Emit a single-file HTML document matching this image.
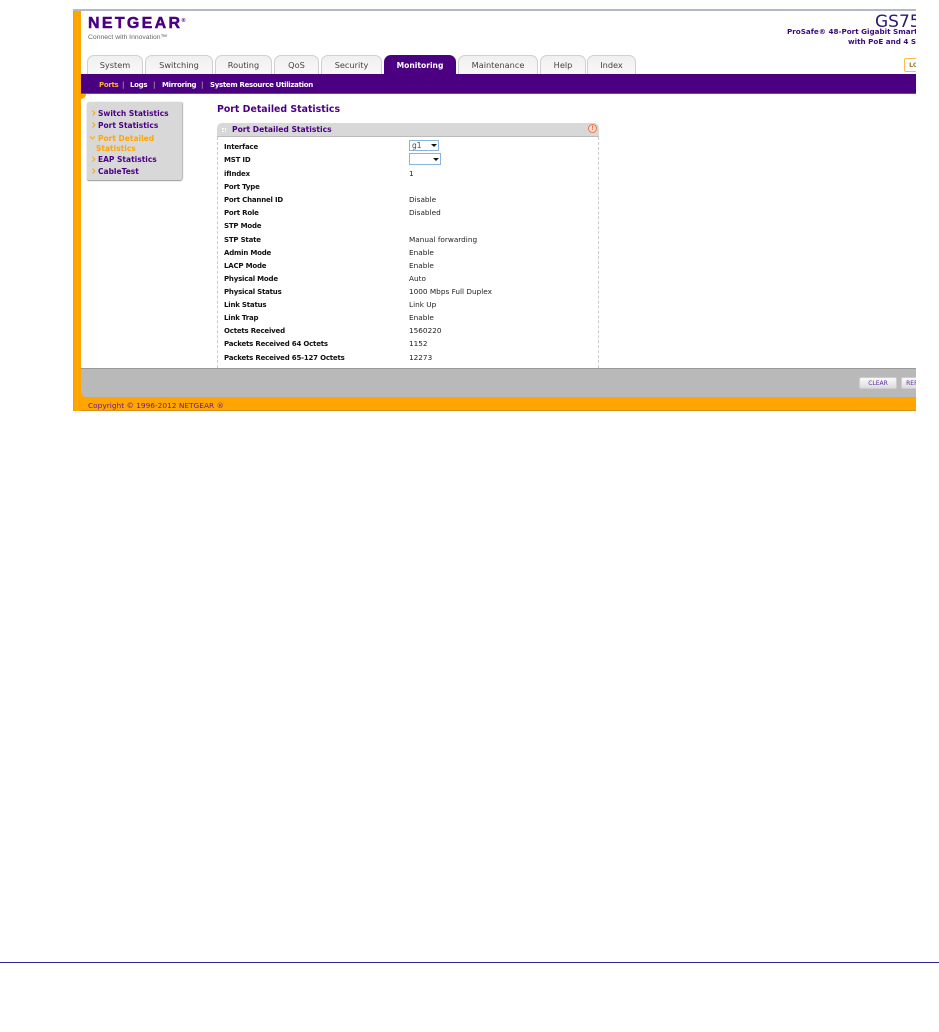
<!DOCTYPE html>
<html><head><meta charset="utf-8"><style>
html,body{margin:0;padding:0;background:#fff}
body{width:939px;height:1032px;position:relative;overflow:hidden;font-family:"DejaVu Sans","Liberation Sans",sans-serif}
#w{position:absolute;left:73px;top:9px;width:843px;height:402px;overflow:hidden;background:#fff;filter:blur(.3px)}
#w div{position:absolute;white-space:nowrap}
.tab{top:46px;height:18px;background:linear-gradient(#f0f0f0,#f8f8f8);border:1px solid #d0d0d0;border-bottom:0;border-radius:7px 7px 0 0;text-align:center;font:8.2px/19px "DejaVu Sans",sans-serif;color:#444}
.l{left:151px;font:bold 7px/10px "DejaVu Sans",sans-serif;letter-spacing:-.2px;color:#111;margin-top:1px}
.v{left:336px;font:7.3px/10px "DejaVu Sans",sans-serif;color:#222;margin-top:1px}
.sb{left:25px;font:bold 7.5px/10px "DejaVu Sans",sans-serif;color:#4b0082}
.ar{left:18px;width:2.5px;height:2.5px;border-top:1.5px solid #ffa500;border-right:1.5px solid #ffa500;transform:rotate(45deg)}
.m{top:71px;font:bold 7px/10px "DejaVu Sans",sans-serif;letter-spacing:-.3px;color:#fff}
.s{top:71px;font:7px/10px "DejaVu Sans",sans-serif;color:#ccc}
</style></head><body>
<div id="w">
<div style="left:0;top:0;width:843px;height:2px;background:#b4b8c4"></div>
<div style="left:0;top:2px;width:8px;height:400px;background:#ffa500;border-left:1px solid #c8a050;box-sizing:border-box"></div>

<div style="left:15px;top:5px;font:bold 16px/20px 'Liberation Sans',sans-serif;letter-spacing:2.3px;color:#4b0082;-webkit-text-stroke:.5px #4b0082">NETGEAR</div>
<div style="left:108px;top:9px;font:bold 5px/6px 'DejaVu Sans',sans-serif;color:#4b0082">®</div>
<div style="left:15px;top:24px;font:6.8px/9px 'Liberation Sans',sans-serif;color:#666">Connect with Innovation™</div>

<div style="left:714px;top:1px;width:200px;height:40px">
<div style="left:88px;top:2px;font:17px/20px 'DejaVu Sans',sans-serif;color:#2a1a70">GS752</div>
<div style="left:0;top:17px;font:bold 7.2px/10px 'DejaVu Sans',sans-serif;color:#3c0a80">ProSafe® 48-Port Gigabit Smart Switch</div>
<div style="left:61px;top:27px;font:bold 7.2px/10px 'DejaVu Sans',sans-serif;color:#3c0a80">with PoE and 4 SFP</div>
</div>

<div class="tab" style="left:14px;width:54px">System</div>
<div class="tab" style="left:72px;width:66px">Switching</div>
<div class="tab" style="left:142px;width:55px">Routing</div>
<div class="tab" style="left:201px;width:43px">QoS</div>
<div class="tab" style="left:248px;width:59px">Security</div>
<div class="tab" style="left:311px;width:72px;height:19px;background:#4b0082;border:0;color:#fff;font-weight:bold;font-size:7.6px;line-height:21px">Monitoring</div>
<div class="tab" style="left:385px;width:78px">Maintenance</div>
<div class="tab" style="left:467px;width:44px">Help</div>
<div class="tab" style="left:514px;width:47px">Index</div>
<div style="left:831px;top:49px;width:20px;height:12px;border:1px solid #ffb84d;border-radius:2px;font:bold 6.5px/13px 'DejaVu Sans',sans-serif;color:#a08030;text-indent:4px">LOGOUT</div>

<div style="left:8px;top:65px;width:835px;height:20px;background:#4b0082;border-bottom:1px solid #6a4a90;box-sizing:border-box"></div>
<div class="m" style="left:26px;color:#ffb030">Ports</div>
<div class="s" style="left:49px">|</div>
<div class="m" style="left:57px">Logs</div>
<div class="s" style="left:80px">|</div>
<div class="m" style="left:89px">Mirroring</div>
<div class="s" style="left:128px">|</div>
<div class="m" style="left:137px">System Resource Utilization</div>
<div style="left:8px;top:85px;width:5px;height:5px;background:#ffa500;border-radius:0 0 5px 0"></div>

<div style="left:14px;top:93px;width:95px;height:78px;background:#d8d8d8;border-radius:2px;box-shadow:0 1px 1px #999,1px 0 1px #bbb"></div>
<div class="ar" style="top:102px"></div><div class="sb" style="top:100px">Switch Statistics</div>
<div class="ar" style="top:114px"></div><div class="sb" style="top:112px">Port Statistics</div>
<div class="ar" style="top:126px;transform:rotate(135deg)"></div><div class="sb" style="top:125px;color:#ffa500">Port Detailed</div>
<div class="sb" style="top:135px;left:23px;color:#ffa500">Statistics</div>
<div class="ar" style="top:148px"></div><div class="sb" style="top:146px">EAP Statistics</div>
<div class="ar" style="top:160px"></div><div class="sb" style="top:158px">CableTest</div>

<div style="left:144px;top:94px;font:bold 9.4px/13px 'DejaVu Sans',sans-serif;color:#4b0082">Port Detailed Statistics</div>

<div style="left:144px;top:114px;width:382px;height:14px;background:#d8d8d8;border-bottom:1px solid #bbb;border-radius:5px 5px 0 0;box-sizing:border-box"></div>
<div style="left:159px;top:115px;font:bold 7.6px/12px 'DejaVu Sans',sans-serif;color:#4b0082">Port Detailed Statistics</div>
<div style="left:149px;top:119px;width:4px;height:4px;border:1px dotted #fff;box-sizing:border-box"></div>
<div style="left:515px;top:115px;width:7px;height:7px;border:1px solid #f07040;border-radius:50%;background:#fbe0d0;font:bold 6px/7px 'DejaVu Sans',sans-serif;color:#f07040;text-align:center">!</div>
<div style="left:144px;top:128px;height:231px;width:380px;border-left:1px dashed #ccc;border-right:1px dashed #ccc"></div>

<div class="l" style="top:132px">Interface</div>
<div class="l" style="top:145px">MST ID</div>
<div class="l" style="top:159px">ifIndex</div>
<div class="l" style="top:172px">Port Type</div>
<div class="l" style="top:185px">Port Channel ID</div>
<div class="l" style="top:198px">Port Role</div>
<div class="l" style="top:211px">STP Mode</div>
<div class="l" style="top:225px">STP State</div>
<div class="l" style="top:238px">Admin Mode</div>
<div class="l" style="top:251px">LACP Mode</div>
<div class="l" style="top:264px">Physical Mode</div>
<div class="l" style="top:277px">Physical Status</div>
<div class="l" style="top:290px">Link Status</div>
<div class="l" style="top:303px">Link Trap</div>
<div class="l" style="top:316px">Octets Received</div>
<div class="l" style="top:329px">Packets Received 64 Octets</div>
<div class="l" style="top:343px">Packets Received 65-127 Octets</div>

<div style="left:336px;top:131px;width:30px;height:11px;border:1px solid #8ab4e0;box-sizing:border-box;font:7.5px/10px 'DejaVu Sans',sans-serif;color:#444;text-indent:2px">g1</div>
<div style="left:358px;top:135px;width:0;height:0;border:3px solid transparent;border-top:3px solid #111;border-bottom:0"></div>
<div style="left:336px;top:144px;width:32px;height:12px;border:1px solid #8ab4e0;box-sizing:border-box"></div>
<div style="left:360px;top:149px;width:0;height:0;border:3px solid transparent;border-top:3px solid #111;border-bottom:0"></div>

<div class="v" style="top:159px">1</div>
<div class="v" style="top:185px">Disable</div>
<div class="v" style="top:198px">Disabled</div>
<div class="v" style="top:225px">Manual forwarding</div>
<div class="v" style="top:238px">Enable</div>
<div class="v" style="top:251px">Enable</div>
<div class="v" style="top:264px">Auto</div>
<div class="v" style="top:277px">1000 Mbps Full Duplex</div>
<div class="v" style="top:290px">Link Up</div>
<div class="v" style="top:303px">Enable</div>
<div class="v" style="top:316px">1560220</div>
<div class="v" style="top:329px">1152</div>
<div class="v" style="top:343px">12273</div>

<div style="left:8px;top:378px;width:835px;height:24px;background:#ffa500;border-bottom:1px solid #d89020;box-sizing:border-box"></div>
<div style="left:8px;top:359px;width:835px;height:29px;background:#b9b9b9;border-top:1px solid #999;border-radius:0 0 0 6px;box-sizing:border-box"></div>
<div style="left:786px;top:368px;width:36px;height:10px;background:linear-gradient(#fafafa,#ddd);border:1px solid #ccc;border-radius:2px;font:6px/11px 'DejaVu Sans',sans-serif;color:#5a2aa0;text-align:center">CLEAR</div>
<div style="left:828px;top:368px;width:36px;height:10px;background:linear-gradient(#fafafa,#ddd);border:1px solid #ccc;border-radius:2px;font:6px/11px 'DejaVu Sans',sans-serif;color:#5a2aa0;text-align:center">REFRESH</div>
<div style="left:15px;top:392px;font:7.4px/10px 'DejaVu Sans',sans-serif;color:#6a1a8a">Copyright © 1996-2012 NETGEAR ®</div>
</div>
<div style="position:absolute;left:0;top:962px;width:939px;height:1px;background:#2a2a90"></div>
</body></html>
